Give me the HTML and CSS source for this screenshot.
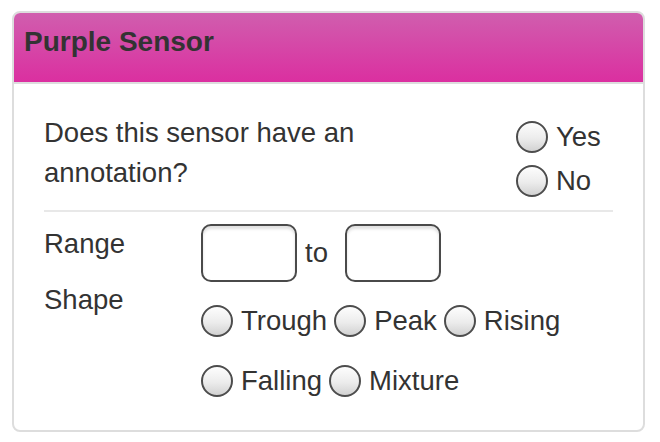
FILE: index.html
```html
<!DOCTYPE html>
<html>
<head>
<meta charset="utf-8">
<link rel="stylesheet" href="styles.css">
</head>
<body>
<div class="panel">
  <div class="panel-heading">Purple Sensor</div>
  <div class="panel-body">
    <div class="question-row">
      <div class="question">Does this sensor have an annotation?</div>
      <div class="options">
        <label class="opt"><input type="radio" name="ann" class="radio"><span>Yes</span></label>
        <label class="opt"><input type="radio" name="ann" class="radio"><span>No</span></label>
      </div>
    </div>
    <div class="divider"></div>
    <div class="form-row range-row">
      <div class="label">Range</div>
      <div class="range-controls">
        <input type="text" class="box">
        <span class="to">to</span>
        <input type="text" class="box">
      </div>
    </div>
    <div class="form-row shape-row">
      <div class="label shape-label">Shape</div>
      <div class="shape-controls">
        <div class="shape-line">
          <label class="opt"><input type="radio" name="shape" class="radio"><span>Trough</span></label>
          <label class="opt"><input type="radio" name="shape" class="radio"><span>Peak</span></label>
          <label class="opt"><input type="radio" name="shape" class="radio"><span>Rising</span></label>
        </div>
        <div class="shape-line">
          <label class="opt"><input type="radio" name="shape" class="radio"><span>Falling</span></label>
          <label class="opt"><input type="radio" name="shape" class="radio"><span>Mixture</span></label>
        </div>
      </div>
    </div>
  </div>
</div>
</body>
</html>
```
FILE: styles.css
```css
* { box-sizing: border-box; }
html, body { margin: 0; padding: 0; background: #fff; }
body {
  font-family: "Liberation Sans", Arial, Helvetica, sans-serif;
  color: #333;
  font-size: 27.5px;
}
.panel {
  margin: 11px 0 0 12px;
  width: 633px;
  height: 421px;
  border: 2px solid #dddddd;
  border-radius: 8px;
  overflow: hidden;
  background: #fff;
}
.panel-heading {
  height: 71px;
  padding: 13px 10px 0 10px;
  line-height: 32px;
  font-size: 28px;
  font-weight: bold;
  color: #333;
  background: linear-gradient(to bottom, #d05eae 0%, #db2fa0 100%);
  border-bottom: 2px solid #dddddd;
}
.panel-body {
  padding: 29px 30px 0 30px;
}
.question-row {
  display: grid;
  grid-template-columns: 1fr 97px;
}
.question {
  line-height: 40px;
  max-width: 340px;
}
.options {
  padding-top: 1.5px;
  display: flex;
  flex-direction: column;
}
.options .opt { height: 44px; }
.opt {
  display: flex;
  align-items: center;
  gap: 8px;
  line-height: 40px;
}
.radio {
  appearance: none;
  -webkit-appearance: none;
  margin: 0;
  width: 32px;
  height: 32px;
  border-radius: 50%;
  border: 2px solid #4d4d4d;
  background: linear-gradient(to bottom, #fdfdfd 0%, #ececec 55%, #d2d2d2 100%);
  flex: none;
}
.divider {
  margin-top: 7.5px;
  height: 2px;
  background: #e8e8e8;
  margin-bottom: 12px;
}
.form-row {
  display: grid;
  grid-template-columns: 157px 1fr;
}
.label {
  line-height: 40px;
}
.shape-label {
  margin-top: -2px;
}
.range-controls {
  display: flex;
  align-items: center;
}
.box {
  width: 96px;
  height: 58px;
  margin: 0;
  border: 2px solid #4a4a4a;
  border-radius: 10px;
  background: #fff;
  box-shadow: inset 0 3px 3px rgba(0, 0, 0, 0.12);
  font: inherit;
  padding: 0 8px;
}
.to {
  margin: 0 17px 0 8px;
  line-height: 40px;
}
.shape-controls {
  padding-top: 19px;
  display: flex;
  flex-direction: column;
  gap: 20px;
}
.shape-line {
  display: flex;
  align-items: center;
  gap: 7px;
  height: 40px;
}
```
